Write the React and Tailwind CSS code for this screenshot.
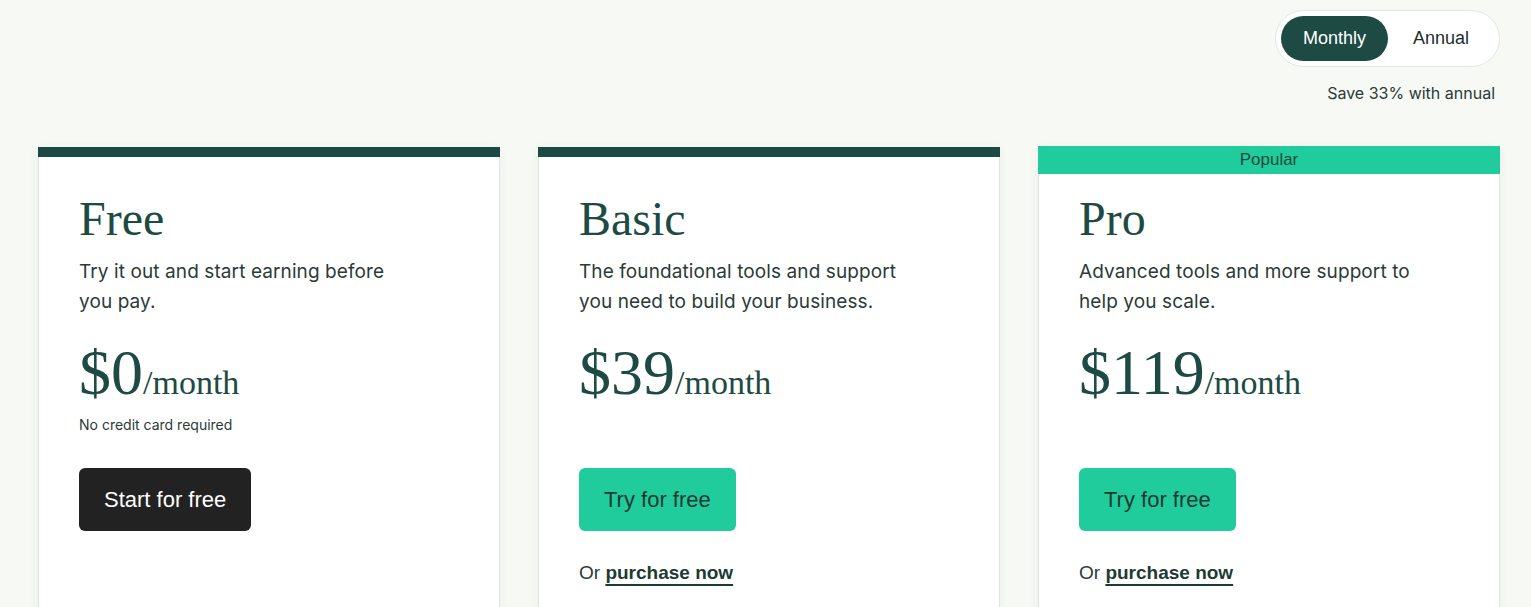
import { useState } from 'react';

const plans = [
  {
    name: 'Free',
    description: 'Try it out and start earning before you pay.',
    price: '$0',
    note: 'No credit card required',
    cta: 'Start for free',
    dark: true,
  },
  {
    name: 'Basic',
    description: 'The foundational tools and support you need to build your business.',
    price: '$39',
    cta: 'Try for free',
    purchase: true,
  },
  {
    name: 'Pro',
    description: 'Advanced tools and more support to help you scale.',
    price: '$119',
    cta: 'Try for free',
    purchase: true,
    popular: true,
  },
];

const PlanCard = ({ plan }) => (
  <div className="relative bg-white border border-[#dfe6e1] shadow-[0_2px_10px_rgba(30,60,50,0.06)] h-[480px]">
    {plan.popular ? (
      <div className="absolute -top-[2px] -left-px -right-px h-[28px] bg-[#21cc9c] flex items-center justify-center text-[17px] text-[#1b4a3f]">
        Popular
      </div>
    ) : (
      <div className="absolute -top-px -left-px -right-px h-[10px] bg-[#1d4a42]" />
    )}
    <div className="pt-[42px] px-[40px]">
      <h2 className="text-[48px] leading-[1.2] text-[#1d4a42] font-['Liberation_Serif',serif]">
        {plan.name}
      </h2>
      <p className="mt-[9px] max-w-[338px] text-[19px] tracking-[0.005em] leading-[30px] text-[#2a3b37] font-['Inter',sans-serif]">
        {plan.description}
      </p>
      <div className="mt-[21px] flex items-baseline text-[#1d4a42] font-['Liberation_Serif',serif]">
        <span className="text-[64px] leading-[1.1]">{plan.price}</span>
        <span className="text-[34px] leading-none">/month</span>
      </div>
      <div className="h-[30px] pt-[6px] text-[14px] text-[#2a3b37] font-['Inter',sans-serif]">
        {plan.note}
      </div>
      <button
        className={`mt-[30px] h-[63px] px-[25px] rounded-[6px] text-[22px] ${
          plan.dark ? 'bg-[#222222] text-white' : 'bg-[#21cc9c] text-[#1a3a33]'
        }`}
      >
        {plan.cta}
      </button>
      <p className="mt-[28px] text-[19px] text-[#2a3b37]">
        {plan.purchase && (
          <>
            Or{' '}
            <a href="#" className="font-semibold text-[#1d3b35] underline underline-offset-[5px] decoration-2">
              purchase now
            </a>
          </>
        )}
      </p>
    </div>
  </div>
);

const App = () => {
  const [billing, setBilling] = useState('monthly');

  return (
    <div className="min-h-screen bg-[#f7f9f4] pl-[38px] pr-[31px] pt-[10px] font-['Liberation_Sans',sans-serif]">
      <div className="flex flex-col items-end">
        <div className="flex items-center h-[57px] px-[5px] rounded-full bg-white border border-[#e4e8e3]">
          <button
            onClick={() => setBilling('monthly')}
            className={`h-[45px] w-[107px] rounded-full text-[18px] ${
              billing === 'monthly' ? 'bg-[#1d4a42] text-white' : 'text-[#1d2f2b]'
            }`}
          >
            Monthly
          </button>
          <button
            onClick={() => setBilling('annual')}
            className={`h-[45px] w-[106px] rounded-full text-[18px] ${
              billing === 'annual' ? 'bg-[#1d4a42] text-white' : 'text-[#1d2f2b]'
            }`}
          >
            Annual
          </button>
        </div>
        <p className="mt-[14px] mr-[5px] text-[16px] text-[#2a3b37] font-['Inter',sans-serif]">
          Save 33% with annual
        </p>
      </div>

      <div className="mt-[42px] grid grid-cols-3 gap-[38px]">
        {plans.map((plan) => (
          <PlanCard key={plan.name} plan={plan} />
        ))}
      </div>
    </div>
  );
};

export default App;
